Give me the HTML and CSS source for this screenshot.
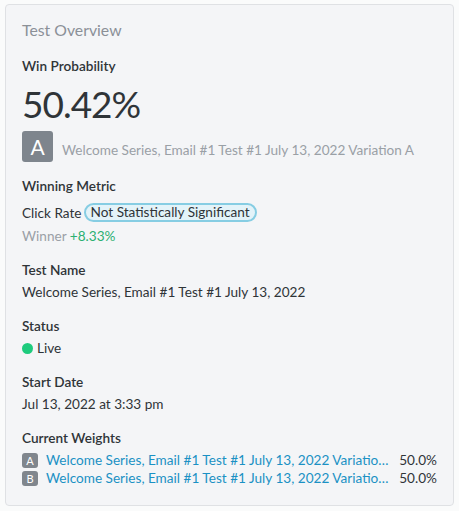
FILE: index.html
```html
<!DOCTYPE html>
<html>
<head>
<meta charset="utf-8">
<link rel="stylesheet" href="styles.css">
</head>
<body>
<div class="card">
  <div class="title">Test Overview</div>

  <div class="label label-first">Win Probability</div>
  <div class="big">50.42%</div>
  <div class="variant">
    <span class="badge-lg">A</span>
    <span class="variant-name">Welcome Series, Email #1 Test #1 July 13, 2022 Variation A</span>
  </div>

  <div class="label label-metric">Winning Metric</div>
  <div class="metric-row">
    <span>Click Rate</span>
    <span class="pill">Not Statistically Significant</span>
  </div>
  <div class="winner">Winner <span class="plus">+8.33%</span></div>

  <div class="label section">Test Name</div>
  <div class="value">Welcome Series, Email #1 Test #1 July 13, 2022</div>

  <div class="label section">Status</div>
  <div class="value status"><span class="dot"></span>Live</div>

  <div class="label section">Start Date</div>
  <div class="value">Jul 13, 2022 at 3:33 pm</div>

  <div class="label section">Current Weights</div>
  <div class="weights">
    <div class="weight-row">
      <span class="badge-sm">A</span>
      <span class="wlink" title="Welcome Series, Email #1 Test #1 July 13, 2022 Variation A">Welcome Series, Email #1 Test #1 July 13, 2022 Variatio…</span>
      <span class="pct">50.0%</span>
    </div>
    <div class="weight-row">
      <span class="badge-sm">B</span>
      <span class="wlink" title="Welcome Series, Email #1 Test #1 July 13, 2022 Variation B">Welcome Series, Email #1 Test #1 July 13, 2022 Variatio…</span>
      <span class="pct">50.0%</span>
    </div>
  </div>
</div>
</body>
</html>
```
FILE: styles.css
```css
html, body {
  margin: 0;
  padding: 0;
  background: #fafbfb;
}
body {
  font-family: "Lato", "Open Sans", sans-serif;
  color: #2f3438;
  font-size: 13.6px;
}
.card {
  margin: 4px 0 0 5px;
  width: 447px;
  height: 500px;
  box-sizing: content-box;
  border: 1px solid #dfe1e4;
  border-radius: 4px;
  background: #f4f5f7;
  padding: 0;
}
.card > * {
  margin-left: 16px;
  margin-right: 16px;
}
.title {
  font-size: 15.8px;
  line-height: 20px;
  color: #8b9097;
  padding-top: 15px;
}
.label {
  font-weight: 600;
  font-size: 13.6px;
  line-height: 18px;
  color: #2f3438;
}
.label-first {
  margin-top: 17px;
}
.big {
  font-size: 37px;
  letter-spacing: -1px;
  line-height: 44px;
  color: #2f3438;
  margin-top: 7px;
}
.variant {
  display: flex;
  align-items: center;
  gap: 9px;
  margin-top: 5px;
}
.badge-lg {
  width: 31px;
  height: 31px;
  border-radius: 3px;
  background: #7e858d;
  color: #fff;
  font-size: 21px;
  display: flex;
  align-items: center;
  justify-content: center;
}
.variant-name {
  color: #9aa0a6;
  padding-top: 6px;
}
.label-metric {
  margin-top: 15px;
}
.metric-row {
  display: flex;
  align-items: center;
  gap: 2px;
  margin-top: 8px;
  line-height: 18px;
}
.pill {
  border: 2px solid #86cde3;
  background: #e3f3f9;
  border-radius: 10px;
  padding: 0 5px;
  line-height: 15px;
  color: #2f3438;
}
.winner {
  color: #9aa0a6;
  margin-top: 5px;
  line-height: 18px;
}
.plus {
  color: #2bb072;
}
.section {
  margin-top: 16px;
}
.value {
  margin-top: 4px;
  line-height: 18px;
}
.status {
  display: flex;
  align-items: center;
  gap: 4px;
}
.dot {
  width: 11px;
  height: 11px;
  border-radius: 50%;
  background: #1ecb7d;
}
.weights {
  margin-top: 4px;
}
.weight-row {
  display: flex;
  align-items: center;
  line-height: 18px;
}
.badge-sm {
  flex: none;
  width: 16px;
  height: 15px;
  border-radius: 3px;
  background: #80868d;
  color: #fff;
  font-size: 11px;
  line-height: 15px;
  text-align: center;
  margin-right: 8px;
}
.wlink {
  color: #1b91c4;
  white-space: nowrap;
  flex: 1;
  min-width: 0;
}
.pct {
  flex: none;
  margin-left: 8px;
  color: #2f3438;
}
```
